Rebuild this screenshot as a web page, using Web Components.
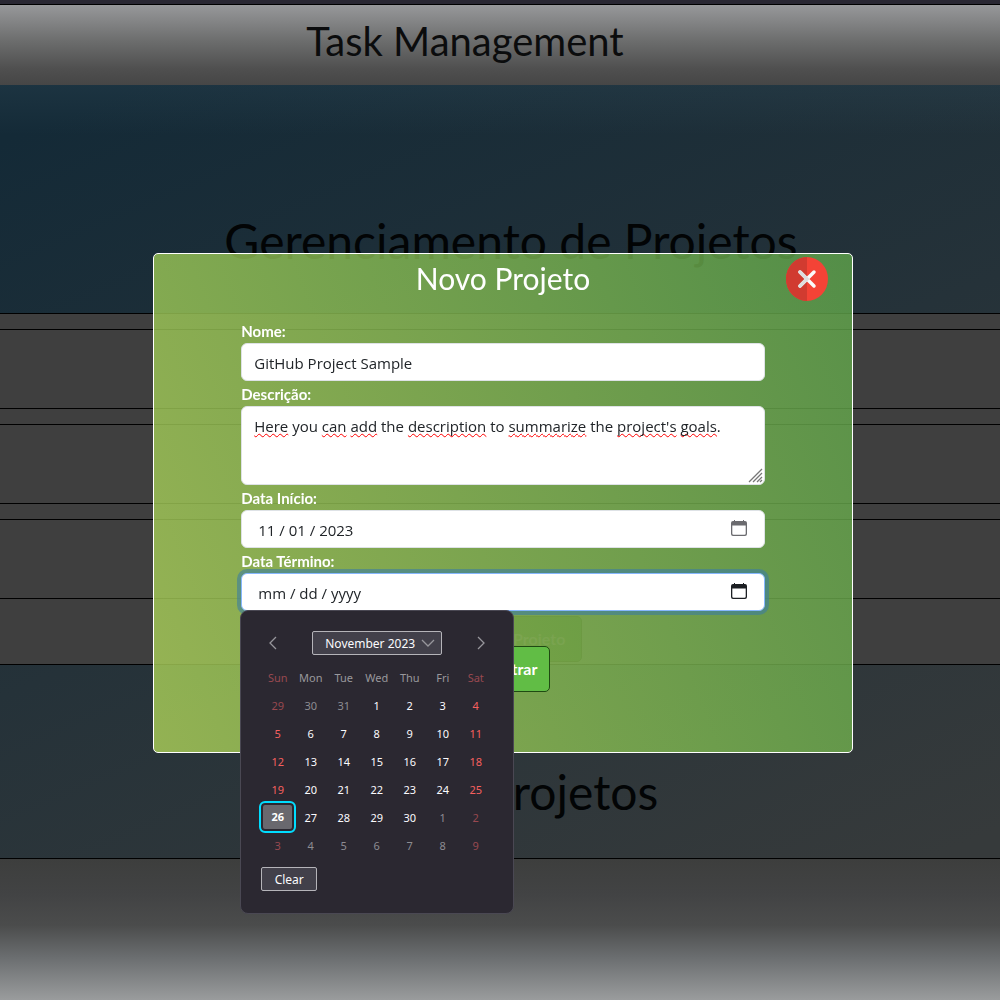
<!DOCTYPE html>
<html lang="pt-BR">
<head>
<meta charset="utf-8">
<meta name="viewport" content="width=device-width, initial-scale=1">
<title>Task Management</title>
<style>
  body {
    margin: 0;
    min-height: 100vh;
    display: flex;
    flex-direction: column;
    font-family: Lato, "Liberation Sans", sans-serif;
    color: #000;
    background: linear-gradient(157deg, #142a37 10%, #363a3b 88%);
  }
  page-footer { flex: 1; }
</style>
</head>
<body>
<page-header>Task Management</page-header>
<page-banner>Gerenciamento de Projetos</page-banner>
<task-list></task-list>
<page-banner compact>Todos Projetos</page-banner>
<page-footer></page-footer>

<modal-window heading="Novo Projeto">
  <form-field label="Nome:" kind="text" value="GitHub Project Sample"></form-field>
  <form-field label="Descrição:" kind="area" value="Here you can add the description to summarize the project's goals."></form-field>
  <form-field label="Data Início:" kind="date" value="11 / 01 / 2023"></form-field>
  <form-field label="Data Término:" kind="date" value="mm / dd / yyyy" active>
    <date-calendar></date-calendar>
  </form-field>
  <submit-button>Cadastrar</submit-button>
</modal-window>

<script>
class BaseElement extends HTMLElement {
  connectedCallback() {
    if (this.shadowRoot) return;
    this.attachShadow({ mode: 'open' }).innerHTML =
      '<style>*{box-sizing:border-box}' + this.styles() + '</style>' + this.markup();
    this.ready();
  }
  ready() {}
}

customElements.define('page-header', class extends BaseElement {
  styles() { return `
    :host { display: block; border-top: 4px solid #2a2833; }
    header { border-top: 1px solid #000; height: 81px; padding-right: 70px;
      display: flex; align-items: center; justify-content: center;
      background: linear-gradient(#97989a, #6c6d6d 45%, #4f4f4f 80%, #464646); }
    h1 { margin: 0 0 8px; font-size: 40px; line-height: 48px; font-weight: 400; color: #0b0c0d; }`; }
  markup() { return '<header><h1><slot></slot></h1></header>'; }
});

customElements.define('page-banner', class extends BaseElement {
  styles() { return `
    :host { display: block; border-bottom: 1px solid #000; }
    section { display: flex; justify-content: center; align-items: flex-end;
      padding: 127px 0 43px 22px; background: linear-gradient(rgba(60,90,105,.2), transparent 50px); }
    :host([compact]) section { padding: 98px 0 37px 6px; background: none; }
    h2 { margin: 0; font-size: 48px; line-height: 58px; font-weight: 400; color: #020405; }`; }
  markup() { return '<section><h2><slot></slot></h2></section>'; }
});

customElements.define('task-list', class extends BaseElement {
  styles() { return `
    :host { display: block; background: #3f3f3f; border-bottom: 1px solid #000; }
    ul { list-style: none; margin: 0; padding: 15px 0 0; display: flex; flex-direction: column; gap: 15px; }
    li { height: 80px; border: solid #000; border-width: 1px 0; }
    .bar { height: 65px; padding-top: 17px; display: flex; justify-content: center; padding-left: 6px; }
    .bar button { font: 700 16px/24px Lato, sans-serif; color: #404040; background: #182f11;
      border: 1px solid #0a1804; border-radius: 5px; width: 158px; height: 46px; padding: 0; }`; }
  markup() { return '<ul><li></li><li></li><li></li></ul><div class="bar"><button type="button">Cadastrar Projeto</button></div>'; }
});

customElements.define('page-footer', class extends BaseElement {
  styles() { return `:host { display: block;
    background: linear-gradient(#3d3e3d, #424344 25%, #4b4c4c 47%, #6b6e70 70%, #9a9c9d); }`; }
  markup() { return '<footer></footer>'; }
});

customElements.define('modal-window', class extends BaseElement {
  styles() { return `
    :host { position: fixed; inset: 0; display: grid; place-items: center; padding: 6px 0 0 6px; }
    section { width: 700px; max-width: 100%; height: 500px; border: 1px solid #fff; border-radius: 5px;
      background: linear-gradient(68deg, rgba(174,210,90,.8), rgba(96,166,76,.8)); }
    .top { display: grid; grid-template-columns: 1fr auto 1fr; align-items: center; height: 50px; }
    h2 { grid-column: 2; margin: 0 0 2px; font-size: 30px; line-height: 40px; font-weight: 400; color: #fff; }
    .close { justify-self: end; margin-right: 24px; padding: 0; border: 0; background: none; display: block; }
    svg { display: block; width: 42px; height: 44px; }
    form { width: 75%; margin: 14px auto 0; display: flex; flex-direction: column; }`; }
  markup() { return `
    <section role="dialog" aria-modal="true" aria-labelledby="t">
      <div class="top">
        <h2 id="t"></h2>
        <button class="close" type="button" aria-label="Fechar">
          <svg viewBox="0 0 42 44" preserveAspectRatio="none">
            <ellipse cx="21" cy="22" rx="21" ry="22" fill="#f44336"/>
            <path d="M21 0A21 22 0 0 0 21 44Z" fill="#d13b30"/>
            <path d="M14 15L28 29M28 15L14 29" stroke="#fafafa" stroke-width="3.500" stroke-linecap="round"/>
            <path d="M14 15L21 22L14 29" fill="none" stroke="#dedede" stroke-width="3.500" stroke-linecap="round"/>
          </svg>
        </button>
      </div>
      <form><slot></slot></form>
    </section>`; }
  ready() { this.shadowRoot.getElementById('t').textContent = this.getAttribute('heading'); }
});

customElements.define('form-field', class extends BaseElement {
  styles() { return `
    :host { display: block; position: relative; }
    label { display: block; font-size: 15px; line-height: 23px; padding-top: 2px; font-weight: 700; color: #fff; }
    .box { position: relative; display: flex; background: #fff; border: 1px solid #dee2e6; border-radius: 6px; }
    input, textarea, .mirror { font: 400 15px/24px "Open Sans", "Noto Sans", sans-serif; color: #212529;
      margin: 0; border: 0; outline: 0; background: none; padding: 7px 12px 5px; width: 100%; }
    input { height: 36px; flex: 1; min-width: 0; }
    textarea { display: block; height: 77px; resize: none; position: relative; overflow: hidden; }
    .mirror { position: absolute; inset: 0; color: transparent; white-space: pre-wrap; }
    .mirror span { text-decoration: underline wavy #f00 1px; text-underline-offset: 1px; text-decoration-skip-ink: none; }
    .grip { position: absolute; right: 1px; bottom: 1px; width: 15px; height: 15px; }
    .date input { padding-left: 16px; }
    .date button { border: 0; background: none; padding: 0 17px 2px 0; display: flex; align-items: center; color: #6b6b6f; }
    .date svg { width: 16px; height: 16px; display: block; }
    :host([active]) .box { border-color: #86b7fe; box-shadow: 0 0 0 4px rgba(60,125,160,.6); }
    :host([active]) button { color: #1c1f23; }`; }
  markup() {
    const kind = this.getAttribute('kind');
    const value = this.getAttribute('value');
    const label = '<label for="c">' + this.getAttribute('label') + '</label>';
    if (kind === 'area') {
      const known = ['you', 'the', 'to'];
      const marked = value.replace(/[\w']+/g, w => known.includes(w) ? w : '<span>' + w + '</span>');
      return label + `<div class="box"><div class="mirror" aria-hidden="true">${marked}</div>
        <textarea id="c" spellcheck="false">${value}</textarea>
        <svg class="grip" viewBox="0 0 15 15" stroke="#777" stroke-width="1.300"><path d="M1 14L14 1M5 14L14 5M9 14L14 9M12 14L14 12"/></svg></div>`;
    }
    if (kind === 'date') {
      return label + `<div class="box date"><input id="c" type="text" value="${value}">
        <button type="button" aria-label="Abrir calendário"><svg viewBox="0 0 16 16" fill="currentColor" fill-rule="evenodd">
        <path d="M3 0h1v1h8V0h1v1h1a2 2 0 0 1 2 2v11a2 2 0 0 1-2 2H2a2 2 0 0 1-2-2V3a2 2 0 0 1 2-2h1zM1.300 5.500V13.500a1.200 1.200 0 0 0 1.200 1.200h11a1.200 1.200 0 0 0 1.200-1.200V5.500z"/></svg></button></div><slot></slot>`;
    }
    return label + `<div class="box"><input id="c" type="text" value="${value}" spellcheck="false"></div>`;
  }
});

customElements.define('submit-button', class extends BaseElement {
  styles() { return `
    :host { display: flex; justify-content: center; padding-top: 35px; }
    button { width: 94px; height: 46px; padding: 0; border: 1px solid #1f4a12; border-radius: 5px;
      background: #61bd45; color: #fff; font: 700 16px/24px Lato, sans-serif; }`; }
  markup() { return '<button type="button"><slot></slot></button>'; }
});

customElements.define('date-calendar', class extends BaseElement {
  styles() { return `
    :host { position: absolute; z-index: 2; top: 100%; left: -1px; margin-top: -1px; width: 274px;
      padding: 20px 20px 22px; background: #2b2831; border: 1px solid #4a4853; border-radius: 8px; color: #fbfbfe;
      box-sizing: border-box; font-family: "Noto Sans", sans-serif; display: flex; flex-direction: column; align-items: flex-start; }
    nav { align-self: stretch; display: flex; justify-content: space-between; align-items: center; padding: 0 5px; }
    button { font: inherit; color: inherit; }
    .arrow { border: 0; background: none; padding: 0; width: 14px; height: 14px; }
    svg { display: block; fill: none; stroke: #97969c; stroke-width: 1.300; }
    .month, .clear { font-size: 12px; height: 24px; border: 1px solid #b5b4b9; border-radius: 2px; background: #42404a; }
    .month { width: 130px; padding: 0 6px 0 12px; display: flex; align-items: center; justify-content: space-between; }
    .clear { width: 56px; padding: 0; margin-top: 8px; }
    table { border-collapse: collapse; table-layout: fixed; width: 231px; margin-top: 8px; font-size: 11px; }
    th, td { height: 28px; padding: 0; text-align: center; font-weight: 400; }
    th { color: #99989c; }
    td.out { color: #8d8c91; }
    td:first-child, td:last-child { color: #f6605f; }
    th:first-child, th:last-child, td.out:first-child, td.out:last-child { color: #984850; }
    td.today { color: #fff; font-weight: 700; }
    td.today span { display: block; height: 32px; line-height: 28px; border: 2px solid #00ddff;
      border-radius: 6px; background: #69686e; box-shadow: inset 0 0 0 2px #2b2831; margin: -2px; }`; }
  markup() {
    const row = cells => '<tr>' + cells.join('') + '</tr>';
    const names = ['Sun', 'Mon', 'Tue', 'Wed', 'Thu', 'Fri', 'Sat'];
    let body = '';
    for (let w = 0; w < 6; w++) {
      const cells = [];
      for (let d = 0; d < 7; d++) {
        const day = new Date(2023, 9, 29 + w * 7 + d);
        const inside = day.getMonth() === 10;
        const n = day.getDate();
        cells.push(inside && n === 26 ? '<td class="today"><span>26</span></td>'
          : `<td class="${inside ? '' : 'out'}">${n}</td>`);
      }
      body += row(cells);
    }
    return `
      <nav>
        <button class="arrow" type="button" aria-label="Previous month"><svg viewBox="0 0 14 14"><path d="M10 1L4 7L10 13"/></svg></button>
        <button class="month" type="button"><span>November 2023</span><svg width="14" height="14" viewBox="0 0 14 14"><path d="M1 4L7 10L13 4"/></svg></button>
        <button class="arrow" type="button" aria-label="Next month"><svg viewBox="0 0 14 14"><path d="M4 1L10 7L4 13"/></svg></button>
      </nav>
      <table><thead>${row(names.map(n => '<th scope="col">' + n + '</th>'))}</thead><tbody>${body}</tbody></table>
      <button class="clear" type="button">Clear</button>`;
  }
});
</script>
</body>
</html>
